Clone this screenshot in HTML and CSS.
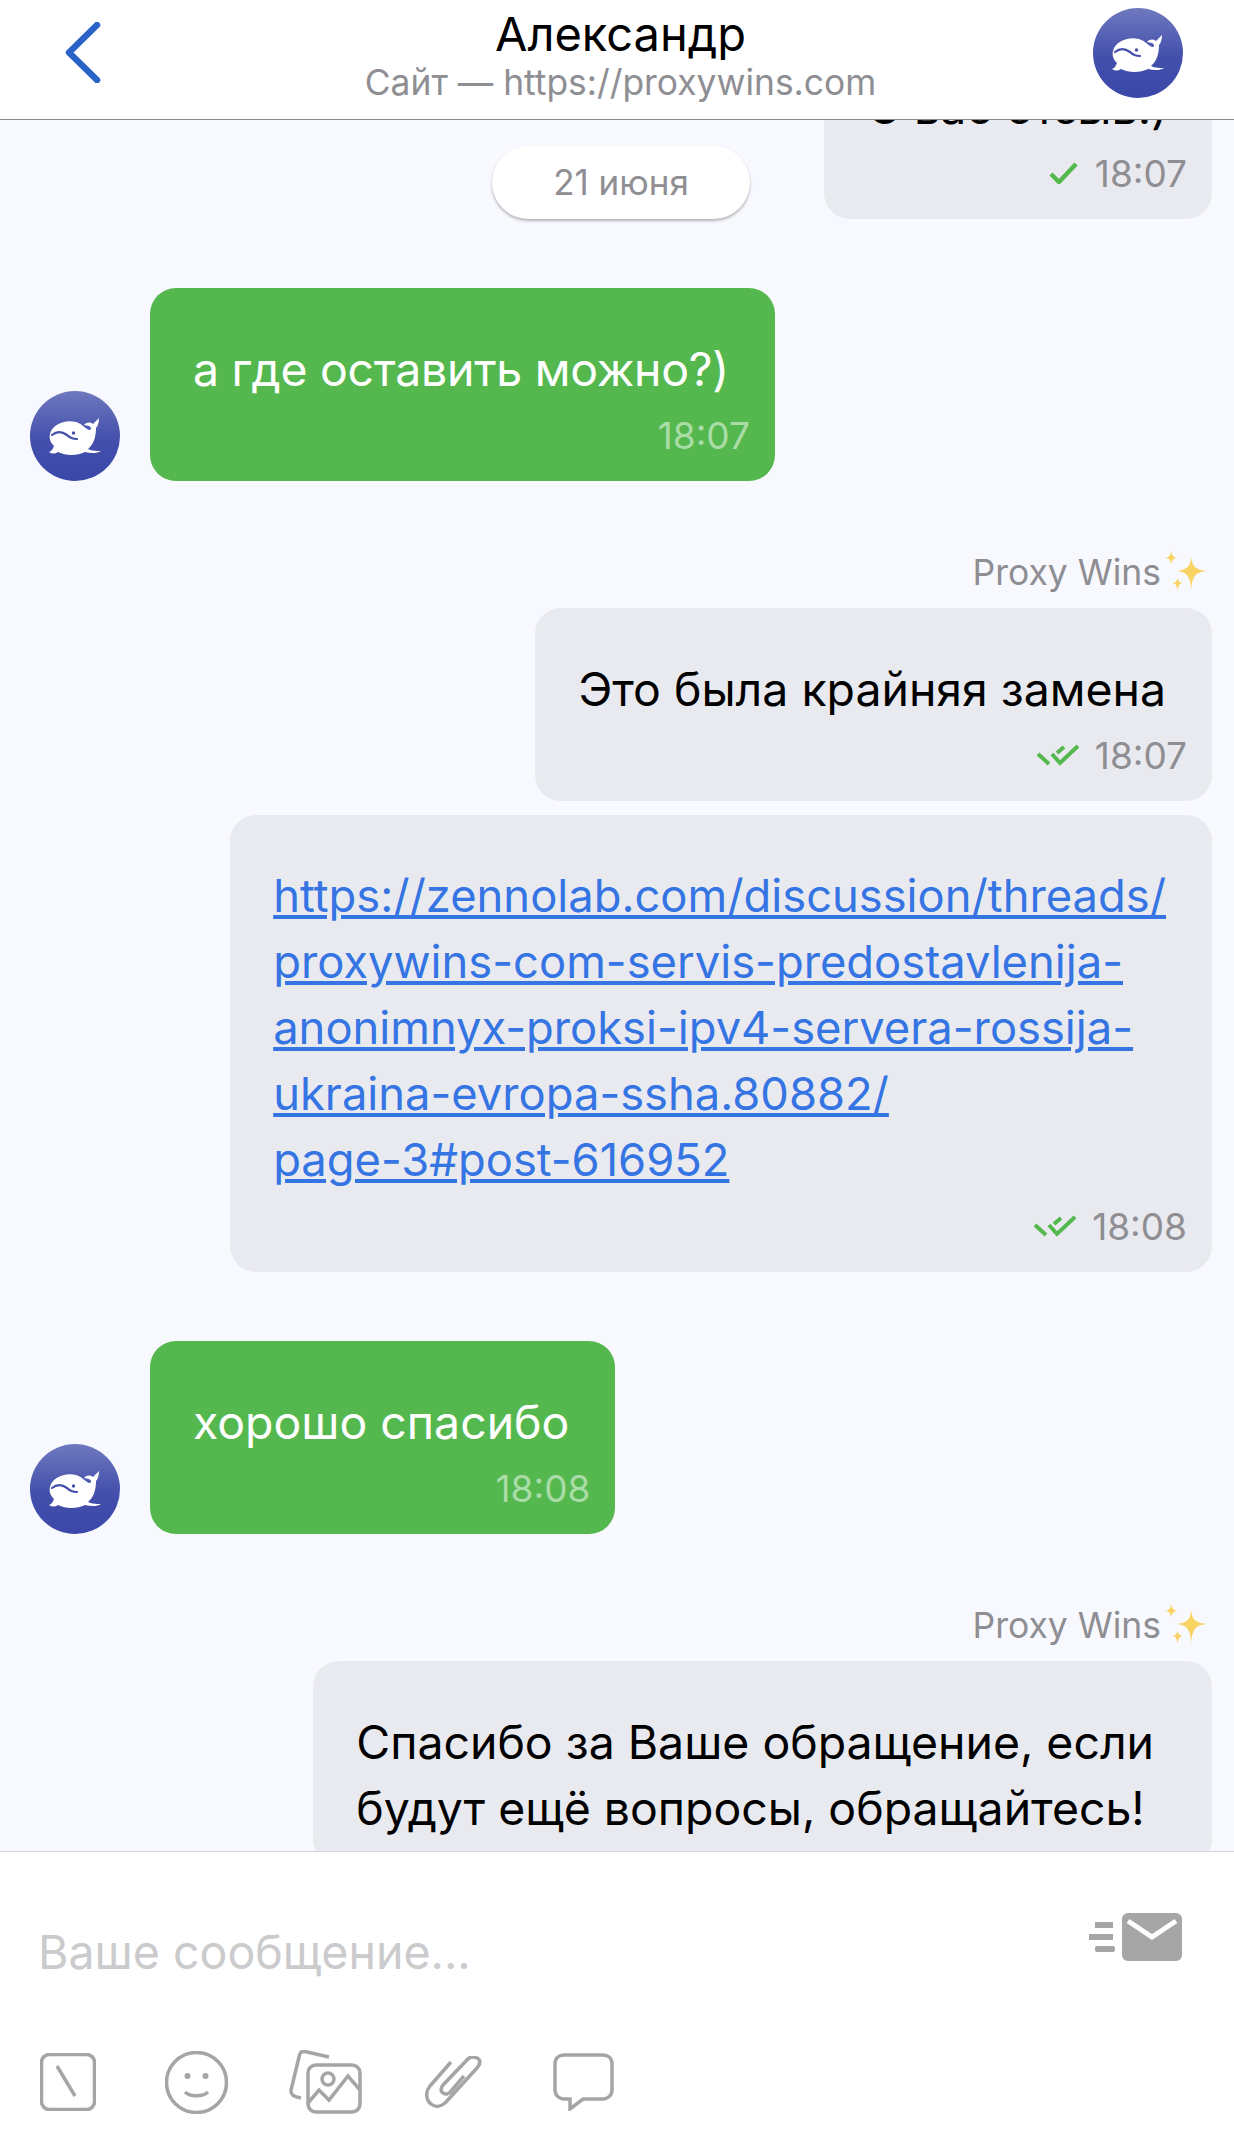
FILE: index.html
```html
<!DOCTYPE html>
<html lang="ru">
<head>
    <meta charset="UTF-8">
    <meta name="viewport" content="width=device-width, initial-scale=1.0">
    <title>Александр</title>
    <link rel="stylesheet" href="styles.css">
</head>
<body>
    <svg class="defs" aria-hidden="true">
        <defs>
            <linearGradient id="avatarFill" x1="0" y1="0" x2="0" y2="1">
                <stop offset="0" stop-color="#6f79bf"/>
                <stop offset="0.55" stop-color="#434fab"/>
                <stop offset="1" stop-color="#3c48a9"/>
            </linearGradient>
            <symbol id="whale" viewBox="0 0 90 90">
                <circle cx="45" cy="45" r="45" fill="url(#avatarFill)"/>
                <path fill="#fff" d="M20 43C22 33 36 28 46 31C53 33 56 39 60 39C62 38 61 36 59 35L54 34C57 31 60 31 63 33L69 27C69 31 68 35 66 37C66 47 63 54 58 58C62 60 67 60 71 60C66 63 60 62 55 61C47 65 36 65 28 61C25 63 22 63 19 61C22 60 23 57 24 55C20 51 19 47 20 43Z"/>
                <path fill="none" stroke="#434fab" stroke-width="2.2" stroke-linecap="round" d="M22 44C28 39 33 41 37 44C40 47 44 48 47 48"/>
                <circle cx="43.500" cy="42" r="1.700" fill="#434fab"/>
            </symbol>
            <symbol id="tick" viewBox="0 0 30 22">
                <path fill="none" stroke="#55b84f" stroke-width="4.500" d="M2 12L10 20L27 2"/>
            </symbol>
            <symbol id="ticks" viewBox="0 0 42 22">
                <path fill="none" stroke="#55b84f" stroke-width="4" d="M1 10L12 20M20 9L27 3M15 10L23 19L41 2"/>
            </symbol>
            <symbol id="sparkles" viewBox="0 0 40 40">
                <path fill="#f9d465" d="M25 6C26 15 29 18 40 19C29 20 26 24 25 37C24 24 21 20 11 19C21 18 24 15 25 6Z"/>
                <path fill="#f9d465" d="M6 0C6.500 4 8 6 12 6.500C8 7 6.500 9 6 13C5.500 9 4 7 0 6.500C4 6 5.500 4 6 0Z"/>
                <path fill="#f9d465" d="M12 25C12.500 29 14 30 17 30.500C14 31 12.500 33 12 38C11.500 33 10 31 7 30.500C10 30 11.500 29 12 25Z"/>
            </symbol>
        </defs>
    </svg>

    <div class="chat">
        <header class="topbar">
            <svg class="back" width="37" height="61" viewBox="0 0 37 61">
                <path fill="none" stroke="#2a63c8" stroke-width="6.500" stroke-linecap="round" stroke-linejoin="round" d="M33 3L5 30.500L33 58"/>
            </svg>
            <div class="topbar-title">
                <div class="name">Александр</div>
                <div class="site">Сайт — https://proxywins.com</div>
            </div>
            <svg class="avatar"><use href="#whale"/></svg>
        </header>

        <main class="messages">
            <div class="date-pill">21 июня</div>

            <div class="bubble out first">
                <div class="text">С вас отзыв:)</div>
                <div class="meta"><svg class="tick"><use href="#tick"/></svg><span>18:07</span></div>
            </div>

            <div class="row-in">
                <svg class="avatar"><use href="#whale"/></svg>
                <div class="bubble in tight">
                    <div class="text">а где оставить можно?)</div>
                    <div class="meta"><span>18:07</span></div>
                </div>
            </div>

            <div class="sender">Proxy Wins<svg class="sparkles"><use href="#sparkles"/></svg></div>
            <div class="bubble out">
                <div class="text">Это была крайняя замена</div>
                <div class="meta"><svg class="ticks"><use href="#ticks"/></svg><span>18:07</span></div>
            </div>

            <div class="bubble out next">
                <div class="text link"><a href="#">https://zennolab.com/discussion/threads/<br>proxywins-com-servis-predostavlenija-<br>anonimnyx-proksi-ipv4-servera-rossija-<br>ukraina-evropa-ssha.80882/<br>page-3#post-616952</a></div>
                <div class="meta"><svg class="ticks"><use href="#ticks"/></svg><span>18:08</span></div>
            </div>

            <div class="row-in">
                <svg class="avatar"><use href="#whale"/></svg>
                <div class="bubble in">
                    <div class="text">хорошо спасибо</div>
                    <div class="meta"><span>18:08</span></div>
                </div>
            </div>

            <div class="sender">Proxy Wins<svg class="sparkles"><use href="#sparkles"/></svg></div>
            <div class="bubble out wrapped">
                <div class="text">Спасибо за Ваше обращение, если<br>будут ещё вопросы, обращайтесь!</div>
            </div>
        </main>

        <footer class="composer">
            <div class="input-row">
                <div class="placeholder">Ваше сообщение...</div>
                <svg class="send" width="93" height="48" viewBox="0 0 93 48">
                    <rect x="6" y="9" width="18" height="6" fill="#a6a6a6"/>
                    <rect x="0" y="21" width="24" height="6" fill="#a6a6a6"/>
                    <rect x="6" y="33" width="20" height="6" rx="2" fill="#a6a6a6"/>
                    <rect x="33" y="0" width="60" height="48" rx="6" fill="#a6a6a6"/>
                    <path fill="none" stroke="#fff" stroke-width="5" d="M39 8L63 24L87 8"/>
                </svg>
            </div>
            <div class="tools">
                <svg class="tool-slash" width="56" height="58" viewBox="0 0 56 58">
                    <rect x="1.500" y="1.500" width="53" height="55" rx="8"/>
                    <path d="M17 13L35 43"/>
                </svg>
                <svg class="tool-smile" width="63" height="63" viewBox="0 0 63 63">
                    <circle cx="31.500" cy="31.500" r="30"/>
                    <path d="M20 41C25 46 38 46 43 41"/>
                    <circle class="dot" cx="22.500" cy="25" r="3"/>
                    <circle class="dot" cx="40.500" cy="25" r="3"/>
                </svg>
                <svg class="tool-photo" width="73" height="64" viewBox="0 0 73 64">
                    <path d="M40 7L16 1.500C13 1 11 2.500 10.500 5L2 40C1.500 44 4 47 12 48"/>
                    <rect x="19" y="15" width="52" height="47" rx="8"/>
                    <circle cx="39" cy="29" r="6"/>
                    <path d="M19 53L30 40L40 50L59 26L71 40"/>
                </svg>
                <svg class="tool-clip" width="57" height="52" viewBox="0 0 57 52">
                    <path d="M26 6L5 30C0 36 1 44 6 48C11 52 17 50 21 46L51 13C56 8 56 4 52 2C48 0 44 1 41 5L18 29C15 33 16 36 18 37C21 39 24 38 26 35L39 20"/>
                </svg>
                <svg class="tool-bubble" width="61" height="58" viewBox="0 0 61 58">
                    <path d="M11 2H50C55 2 59 5 59 11V37C59 42 55 46 50 46H30L17 56V46H11C6 46 2 42 2 37V11C2 5 6 2 11 2Z"/>
                </svg>
            </div>
        </footer>
    </div>
</body>
</html>
```

FILE: styles.css
```css
* {
    box-sizing: border-box;
}
body {
    margin: 0;
    font-family: Inter, "Noto Sans", sans-serif;
    background-color: #f7f9fe;
    color: #000;
}
.defs {
    position: absolute;
    width: 0;
    height: 0;
}
.chat {
    height: 2135px;
    display: flex;
    flex-direction: column;
    overflow: hidden;
}
.topbar {
    height: 120px;
    flex: none;
    display: grid;
    grid-template-columns: 1fr auto 1fr;
    align-items: center;
    padding: 0 51px 14px 58px;
    background-color: #fff;
    border-bottom: 1px solid #8b8b8b;
    z-index: 2;
}
.back {
    margin-left: 6px;
}
.topbar-title {
    text-align: center;
    margin-top: 11px;
}
.name {
    font-size: 47px;
    line-height: 44px;
}
.site {
    font-size: 35.400px;
    line-height: 44px;
    color: #8e8e93;
    margin-top: 5px;
}
.avatar {
    width: 90px;
    height: 90px;
    flex: none;
}
.topbar .avatar {
    justify-self: end;
}
.messages {
    flex: 1;
    min-height: 0;
    position: relative;
    display: flex;
    flex-direction: column;
    padding: 0 22px 0 30px;
    overflow: hidden;
}
.date-pill {
    position: absolute;
    top: 26px;
    left: 492px;
    width: 258px;
    height: 73px;
    border-radius: 37px;
    background-color: #fff;
    box-shadow: 0 2px 3px rgba(0, 0, 0, 0.28);
    color: #8e8e93;
    font-size: 35px;
    line-height: 73px;
    text-align: center;
    z-index: 1;
}
.bubble {
    flex: none;
    border-radius: 26px;
    padding: 48px 46px 24px 43px;
}
.bubble.out {
    align-self: flex-end;
    background-color: #e9eaef;
}
.bubble.in {
    background-color: #55b84f;
    color: #fff;
    margin-left: 30px;
}
.bubble.first {
    width: 388px;
    margin-top: -94px;
}
.bubble.next {
    margin-top: 14px;
}
.bubble.wrapped {
    padding-right: 58px;
}
.bubble.tight .text {
    letter-spacing: -0.25px;
}
.text {
    font-size: 46.400px;
    line-height: 66px;
    white-space: nowrap;
}
.text.link {
    font-size: 45.300px;
}
.text a {
    color: #3574e3;
}
.meta {
    display: flex;
    align-items: center;
    justify-content: flex-end;
    gap: 16px;
    height: 44px;
    margin-top: 11px;
    margin-right: -21px;
    font-size: 37px;
    color: #8e8e93;
}
.bubble.in .meta {
    color: #a9dca6;
}
.tick {
    width: 30px;
    height: 22px;
}
.ticks {
    width: 42px;
    height: 22px;
}
.row-in {
    flex: none;
    display: flex;
    align-items: flex-end;
    margin-top: 69px;
}
.sender {
    flex: none;
    align-self: flex-end;
    display: flex;
    align-items: center;
    gap: 4px;
    height: 44px;
    margin-top: 69px;
    margin-bottom: 14px;
    margin-right: 5px;
    font-size: 35.500px;
    color: #8e8e93;
}
.sparkles {
    width: 42px;
    height: 42px;
}
.composer {
    height: 284px;
    flex: none;
    background-color: #fff;
    border-top: 1px solid #d4d4d8;
    z-index: 2;
}
.input-row {
    display: flex;
    align-items: flex-start;
    justify-content: space-between;
    padding: 61px 52px 0 38px;
}
.placeholder {
    font-size: 46.500px;
    line-height: 48px;
    color: #cbcbcd;
    margin-top: 15px;
}
.tools {
    display: flex;
    align-items: center;
    gap: 61px;
    padding: 74px 0 0 40px;
}
.tools svg {
    fill: none;
    stroke: #a5a5a8;
    stroke-width: 3.500;
    flex: none;
}
.tools .tool-smile {
    margin-left: 8px;
}
.tools .tool-clip {
    margin-left: 2px;
}
.tools .tool-bubble {
    margin-left: 10px;
}
.tools .dot {
    fill: #a5a5a8;
    stroke: none;
}
```
